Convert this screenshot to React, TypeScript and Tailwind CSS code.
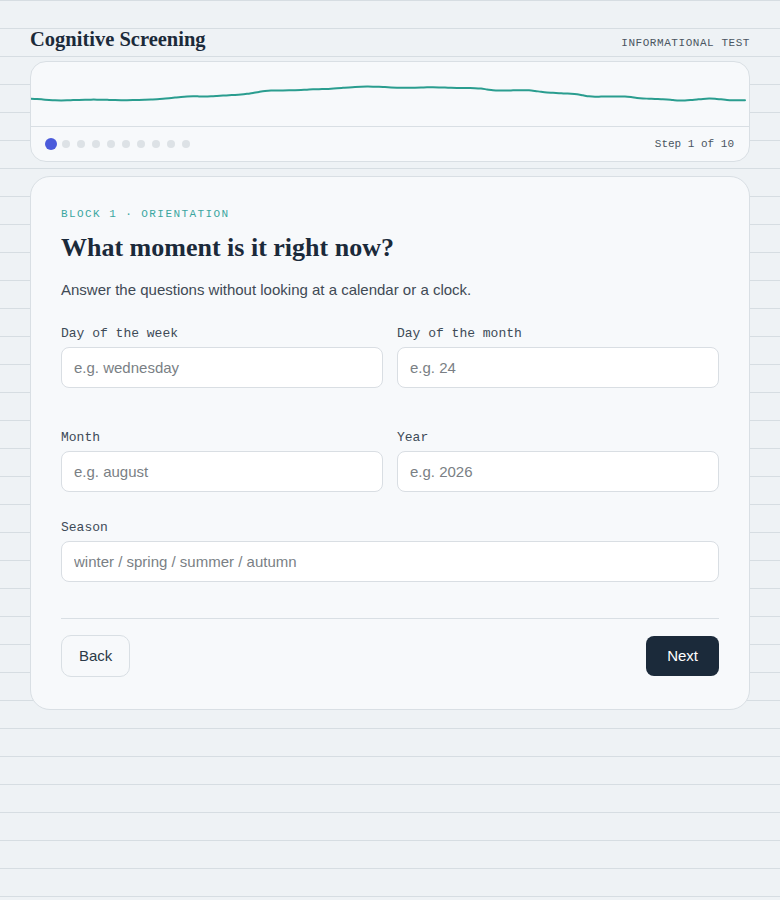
import React from "react";

const serif = "font-['Liberation_Serif','Times_New_Roman',serif]";
const mono = "font-['Liberation_Mono','Courier_New',monospace]";
const sans = "font-['Liberation_Sans',Arial,sans-serif]";

// wave trace, sampled from the reference (x across 718, y inside 64)
const trace: [number, number][] = [
  [0, 36.7], [36, 38], [79, 38.3], [122, 37], [169, 34.7], [202, 32.5],
  [246, 29], [292, 26.5], [346, 25], [392, 25.3], [426, 26.5], [445, 26],
  [469, 28], [492, 28.5], [519, 31], [540, 31.3], [566, 34.5], [592, 35],
  [612, 36.6], [632, 36.7], [652, 38.2], [679, 37.2], [699, 38.3], [718, 37.7],
];

function traceAt(x: number) {
  for (let i = 0; i < trace.length - 1; i++) {
    const [x0, y0] = trace[i];
    const [x1, y1] = trace[i + 1];
    if (x >= x0 && x <= x1) {
      const t = (x - x0) / (x1 - x0);
      const s = (1 - Math.cos(t * Math.PI)) / 2;
      return y0 + (y1 - y0) * s;
    }
  }
  return trace[trace.length - 1][1];
}

function wavePath() {
  const pts: [number, number][] = [];
  for (let x = 0; x <= 718; x += 6) {
    pts.push([x, traceAt(x) + 0.6 * Math.sin(x / 14)]);
  }
  let d = `M${pts[0][0]},${pts[0][1].toFixed(2)}`;
  for (let i = 0; i < pts.length - 1; i++) {
    const p0 = pts[i - 1] || pts[i];
    const p1 = pts[i];
    const p2 = pts[i + 1];
    const p3 = pts[i + 2] || p2;
    const c1x = p1[0] + (p2[0] - p0[0]) / 6;
    const c1y = p1[1] + (p2[1] - p0[1]) / 6;
    const c2x = p2[0] - (p3[0] - p1[0]) / 6;
    const c2y = p2[1] - (p3[1] - p1[1]) / 6;
    d += ` C${c1x.toFixed(1)},${c1y.toFixed(2)} ${c2x.toFixed(1)},${c2y.toFixed(2)} ${p2[0]},${p2[1].toFixed(2)}`;
  }
  return d;
}

function Field({ label, placeholder }: { label: string; placeholder: string }) {
  return (
    <label className="flex flex-col">
      <span className={`${mono} text-[13px] leading-[13px] text-[#3d4a57] mb-[7px]`}>{label}</span>
      <input
        placeholder={placeholder}
        className={`${sans} h-[41px] w-full rounded-[8px] border border-[#d9dee3] bg-white px-[12px] text-[15px] text-[#1b2a3a] placeholder:text-[#7a7f85] outline-none`}
      />
    </label>
  );
}

export default function App() {
  return (
    <div
      className="min-h-[900px] w-full bg-[#eef2f5]"
      style={{
        backgroundImage:
          "repeating-linear-gradient(to bottom, #d6dde2 0px, #d6dde2 1px, transparent 1px, transparent 28px)",
      }}
    >
      <div className="mx-auto w-[720px] pt-[27px] pb-10">
        {/* Header */}
        <div className="flex items-end justify-between h-[25px]">
          <h1 className={`${serif} text-[20.5px] leading-[25px] font-bold text-[#1b2a3a]`}>
            Cognitive Screening
          </h1>
          <span className={`${mono} text-[11px] leading-[11px] tracking-[0.05em] text-[#4a5561] mb-[3px]`}>
            INFORMATIONAL TEST
          </span>
        </div>

        {/* Progress card */}
        <div className="mt-[9px] rounded-[16px] border border-[#d9dfe4] bg-[#f7f9fb] overflow-hidden">
          <div className="h-[64px]">
            <svg viewBox="0 0 718 64" preserveAspectRatio="none" className="block h-full w-full">
              <path d={wavePath()} fill="none" stroke="#2a9d8f" strokeWidth="2" strokeLinecap="round" />
            </svg>
          </div>
          <div className="flex h-[35px] items-center justify-between border-t border-[#d9dfe4] pl-[16px] pr-[15px]">
            <div className="flex items-center gap-[7px]">
              {Array.from({ length: 10 }).map((_, i) => (
                <span
                  key={i}
                  className={
                    i === 0
                      ? "h-2 w-2 rounded-full bg-[#4b5bdb] scale-150"
                      : "h-2 w-2 rounded-full bg-[#dde2e6]"
                  }
                />
              ))}
            </div>
            <span className={`${mono} text-[11px] text-[#4a5561]`}>Step 1 of 10</span>
          </div>
        </div>

        {/* Question card */}
        <div className="mt-[14px] rounded-[20px] border border-[#d9dfe4] bg-[#f7f9fb] px-[30px] pt-[32px] pb-[32px]">
          <p className={`${mono} text-[11px] leading-[11px] tracking-[0.13em] text-[#3aa6a0]`}>
            BLOCK 1 · ORIENTATION
          </p>
          <h2 className={`${serif} mt-[13px] text-[26px] leading-[30px] font-bold text-[#1b2a3a]`}>
            What moment is it right now?
          </h2>
          <p className={`${sans} mt-[17px] text-[15px] leading-[20px] text-[#3f4a55]`}>
            Answer the questions without looking at a calendar or a clock.
          </p>

          <div className="mt-[27px] grid grid-cols-2 gap-x-[14px] gap-y-[43px]">
            <Field label="Day of the week" placeholder="e.g. wednesday" />
            <Field label="Day of the month" placeholder="e.g. 24" />
            <Field label="Month" placeholder="e.g. august" />
            <Field label="Year" placeholder="e.g. 2026" />
          </div>
          <div className="mt-[29px]">
            <Field label="Season" placeholder="winter / spring / summer / autumn" />
          </div>

          <div className="mt-[36px] border-t border-[#d9dfe4] pt-[16px] flex items-center justify-between">
            <button
              className={`${sans} h-[42px] rounded-[10px] border border-[#d9dfe4] px-[17px] text-[15px] text-[#2b3a48]`}
            >
              Back
            </button>
            <button
              className={`${sans} h-[40px] rounded-[8px] bg-[#1b2a3a] px-[21px] text-[15px] text-white`}
            >
              Next
            </button>
          </div>
        </div>
      </div>
    </div>
  );
}
